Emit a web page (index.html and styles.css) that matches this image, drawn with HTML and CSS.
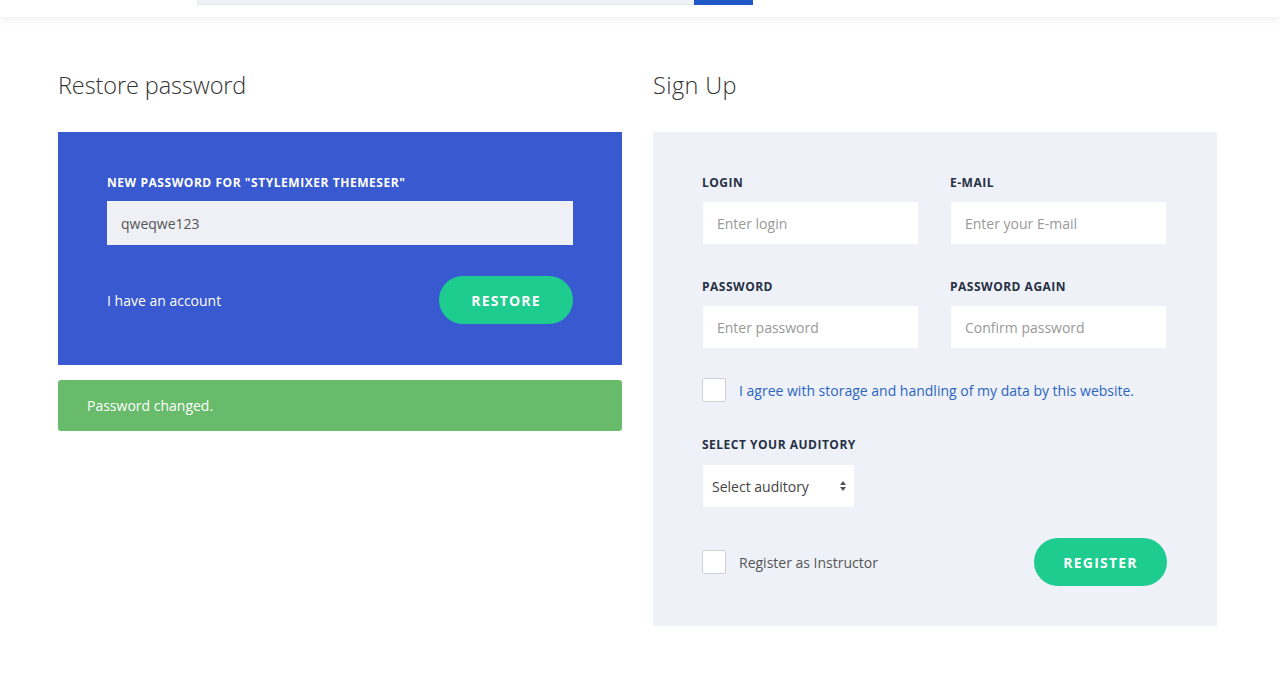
FILE: index.html
```html
<!DOCTYPE html>
<html lang="en">
<head>
<meta charset="utf-8">
<title>Restore password</title>
<link rel="stylesheet" href="styles.css">
</head>
<body>
<header class="topbar">
  <div class="search">
    <div class="search-field"></div>
    <div class="search-btn"></div>
  </div>
</header>
<main class="container">
  <section class="col">
    <h2 class="title">Restore password</h2>
    <form class="card card-blue">
      <label class="label label-light">NEW PASSWORD FOR "STYLEMIXER THEMESER"</label>
      <div class="input input-blue">qweqwe123</div>
      <div class="row-between row-restore">
        <a class="link-white">I have an account</a>
        <button type="button" class="btn">RESTORE</button>
      </div>
    </form>
    <div class="alert">Password changed.</div>
  </section>
  <section class="col">
    <h2 class="title title-wide">Sign Up</h2>
    <form class="card card-gray">
      <div class="grid2">
        <div class="field">
          <label class="label">LOGIN</label>
          <div class="input placeholder">Enter login</div>
        </div>
        <div class="field">
          <label class="label">E-MAIL</label>
          <div class="input placeholder">Enter your E-mail</div>
        </div>
      </div>
      <div class="grid2 grid-gap">
        <div class="field">
          <label class="label">PASSWORD</label>
          <div class="input placeholder">Enter password</div>
        </div>
        <div class="field">
          <label class="label">PASSWORD AGAIN</label>
          <div class="input placeholder">Confirm password</div>
        </div>
      </div>
      <div class="check-row agree">
        <span class="checkbox"></span>
        <span class="agree-text">I agree with storage and handling of my data by this website.</span>
      </div>
      <div class="field auditory">
        <label class="label">SELECT YOUR AUDITORY</label>
        <div class="select">
          <span>Select auditory</span>
          <svg class="arrows" width="6" height="10" viewBox="0 0 6 10"><path d="M3 0 L6 4 H0 Z M0 6 H6 L3 10 Z" fill="#555"/></svg>
        </div>
      </div>
      <div class="row-between row-register">
        <div class="check-row">
          <span class="checkbox"></span>
          <span class="instr-text">Register as Instructor</span>
        </div>
        <button type="button" class="btn">REGISTER</button>
      </div>
    </form>
  </section>
</main>
</body>
</html>
```

FILE: styles.css
```css
* { box-sizing: border-box; }
html, body { margin: 0; padding: 0; }
body {
  background: #ffffff;
  font-family: "Open Sans", "Liberation Sans", sans-serif;
  color: #555;
  width: 1280px;
  height: 695px;
  overflow: hidden;
}
.topbar {
  height: 18px;
  background: #fff;
  box-shadow: 0 2px 8px rgba(0,0,0,0.06);
  border-bottom: 1px solid #f1f2f4;
  position: relative;
}
.search {
  display: flex;
  margin-left: 197px;
  width: 556px;
}
.search-field {
  width: 497px;
  height: 5px;
  background: #f0f1f4;
  border: 1px solid #e6e8ec;
  border-top: none;
}
.search-btn {
  width: 59px;
  height: 5px;
  background: #2158c7;
}
.container {
  display: flex;
  gap: 31px;
  padding-left: 58px;
  padding-top: 52px;
}
.col { width: 564px; }
.title {
  margin: 0;
  font-family: "Open Sans", sans-serif;
  font-weight: 300;
  font-size: 23.5px;
  line-height: 30px;
  color: #333;
  letter-spacing: -0.1px;
}
.title-wide { letter-spacing: 0.4px; }
.card {
  margin-top: 32px;
  padding: 44px 49px 40px 49px;
}
.card-blue { background: #3859cf; padding-bottom: 41px; }
.card-gray { background: #eef1f8; padding-right: 50px; }
.label {
  display: block;
  font-family: "Open Sans", sans-serif;
  font-weight: 700;
  font-size: 12px;
  line-height: 14px;
  color: #273044;
  letter-spacing: 0.5px;
}
.label-light { color: #fff; letter-spacing: 0.55px; }
.input {
  margin-top: 11px;
  height: 44px;
  display: flex;
  align-items: center;
  padding-left: 14px;
  font-size: 14px;
  background: #fff;
}
.input-blue {
  background: #eef0f5;
  color: #555;
}
.row-between {
  display: flex;
  justify-content: space-between;
  align-items: center;
}
.row-restore { margin-top: 31px; }
.link-white {
  color: #fff;
  font-size: 14px;
  font-weight: 500;
}
.btn {
  height: 48px;
  width: 134px;
  border: none;
  border-radius: 24px;
  background: #1ecc90;
  color: #fff;
  font-family: "Open Sans", sans-serif;
  font-weight: 700;
  font-size: 14px;
  letter-spacing: 1.2px;
  cursor: pointer;
}
.alert {
  margin-top: 15px;
  height: 51px;
  background: #67bb6a;
  border-radius: 3px;
  color: #fff;
  font-size: 14px;
  display: flex;
  align-items: center;
  padding-left: 29px;
}
.grid2 {
  display: grid;
  grid-template-columns: 216px 216px;
  column-gap: 32px;
}
.grid-gap { margin-top: 36px; }
.field .input {
  margin-top: 12px;
  height: 42px;
  margin-left: 1px;
  width: 215px;
}
.placeholder { color: #999; }
.check-row {
  display: flex;
  align-items: center;
}
.agree { margin-top: 30px; }
.checkbox {
  width: 24px;
  height: 24px;
  background: #fff;
  border: 1px solid #cfd2d8;
  border-radius: 2px;
  flex: none;
}
.agree-text {
  margin-left: 13px;
  font-size: 14px;
  color: #2b64c0;
}
.instr-text {
  margin-left: 13px;
  font-size: 14px;
  color: #555;
}
.auditory { margin-top: 36px; }
.select {
  margin-top: 13px;
  margin-left: 1px;
  width: 151px;
  height: 42px;
  background: #fff;
  border-radius: 2px;
  display: flex;
  align-items: center;
  justify-content: space-between;
  padding: 0 8px 0 9px;
  font-size: 14px;
  color: #444;
}
.arrows { display: block; }
.row-register { margin-top: 31px; }
.row-register .btn { width: 133px; }
```
